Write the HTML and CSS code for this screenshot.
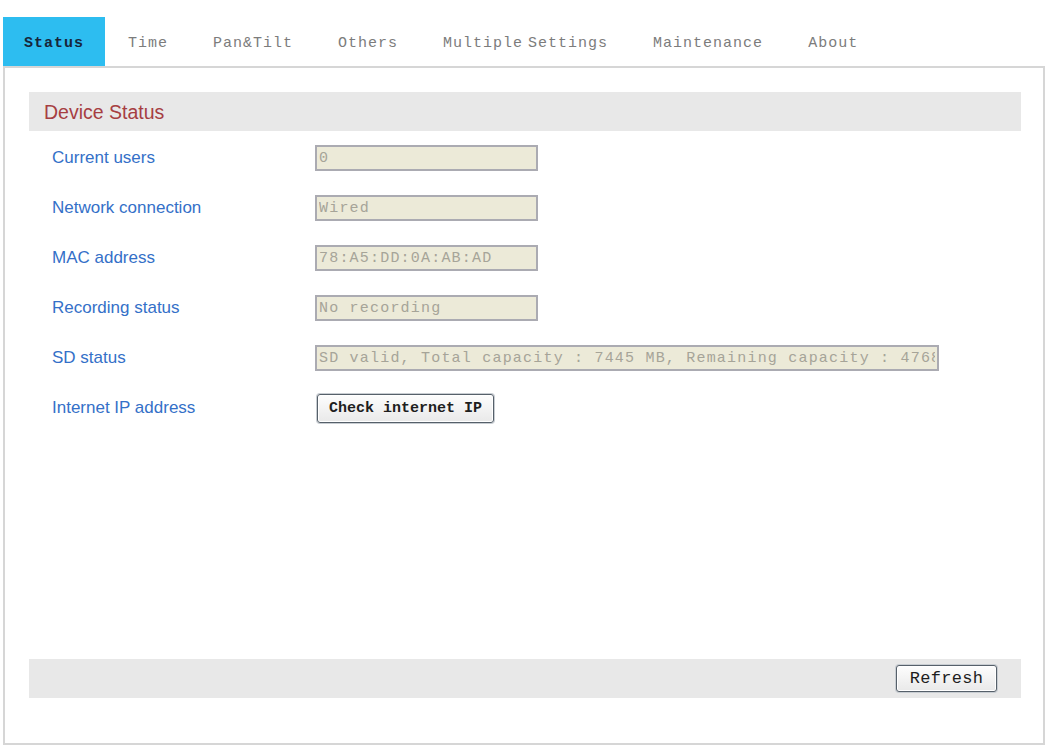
FILE: index.html
```html
<!DOCTYPE html>
<html lang="en">
<head>
    <meta charset="UTF-8">
    <meta name="viewport" content="width=device-width, initial-scale=1.0">
    <title>Device Status</title>
    <link rel="stylesheet" href="styles.css">
</head>
<body>
    <ul class="tabs">
        <li class="tab active">Status</li>
        <li class="tab">Time</li>
        <li class="tab">Pan&amp;Tilt</li>
        <li class="tab">Others</li>
        <li class="tab">Multiple Settings</li>
        <li class="tab">Maintenance</li>
        <li class="tab">About</li>
    </ul>
    <div class="panel">
        <div class="bar bar-head">Device Status</div>
        <div class="row">
            <label for="users">Current users</label>
            <input type="text" id="users" value="0" disabled>
        </div>
        <div class="row">
            <label for="network">Network connection</label>
            <input type="text" id="network" value="Wired" disabled>
        </div>
        <div class="row">
            <label for="mac">MAC address</label>
            <input type="text" id="mac" value="78:A5:DD:0A:AB:AD" disabled>
        </div>
        <div class="row">
            <label for="record">Recording status</label>
            <input type="text" id="record" value="No recording" disabled>
        </div>
        <div class="row">
            <label for="sd">SD status</label>
            <input type="text" id="sd" class="wide" value="SD valid, Total capacity : 7445 MB, Remaining capacity : 4768" disabled>
        </div>
        <div class="row">
            <label>Internet IP address</label>
            <button class="btn btn-check">Check internet IP</button>
        </div>
        <div class="bar bar-foot">
            <button class="btn btn-refresh">Refresh</button>
        </div>
    </div>
</body>
</html>
```

FILE: styles.css
```css
body {
    margin: 0;
    background: #FFFFFF;
    font-family: 'Liberation Sans', Arial, sans-serif;
}
.tabs {
    display: flex;
    list-style: none;
    margin: 0;
    padding: 17px 0 0 3px;
}
.tab {
    height: 49px;
    line-height: 53px;
    padding: 0 22px 0 23px;
    font-family: 'Liberation Mono', 'Courier New', monospace;
    font-size: 15px;
    letter-spacing: 1px;
    word-spacing: -5px;
    color: #7c7c7c;
}
.tab.active {
    background-color: #2DBDF0;
    color: #17263A;
    font-weight: 700;
    padding-left: 21px;
    padding-right: 21px;
}
.panel {
    display: flex;
    flex-direction: column;
    box-sizing: border-box;
    width: 1042px;
    height: 679px;
    margin-left: 3px;
    padding: 24px 22px 45px 24px;
    border: 2px solid #D6D6D6;
}
.bar {
    background-color: #E8E8E8;
    height: 39px;
    box-sizing: border-box;
}
.bar-head {
    margin-bottom: 2px;
    padding-left: 15px;
    line-height: 40px;
    font-size: 19.5px;
    color: #A63E42;
}
.row {
    display: flex;
    align-items: center;
    height: 50px;
    padding-left: 23px;
}
.row label {
    width: 263px;
    flex-shrink: 0;
    font-size: 17px;
    color: #3470C8;
}
.row input {
    box-sizing: border-box;
    width: 223px;
    height: 26px;
    padding: 0 2px;
    border: 2px solid #ABABB2;
    background-color: #ECEAD8;
    color: #A6A498;
    font-family: 'Liberation Mono', 'Courier New', monospace;
    font-size: 15px;
    letter-spacing: 1.2px;
}
.row input.wide {
    width: 624px;
}
.btn {
    box-sizing: border-box;
    border: 1px solid #56606A;
    border-radius: 3px;
    background: linear-gradient(#FDFDFD, #E9E9E9);
    box-shadow: inset 0 0 0 1px #FFFFFF, 0 0 0 1px #C8CDD2;
    font-family: 'Liberation Mono', 'Courier New', monospace;
    color: #1E1E1E;
    padding: 0;
}
.btn-check {
    width: 177px;
    height: 29px;
    margin-left: 2px;
    font-size: 15px;
    font-weight: 700;
}
.bar-foot {
    margin-top: auto;
    display: flex;
    align-items: center;
    justify-content: flex-end;
    padding-right: 24px;
}
.btn-refresh {
    width: 101px;
    height: 27px;
    font-size: 17px;
    letter-spacing: 0.3px;
}
```
